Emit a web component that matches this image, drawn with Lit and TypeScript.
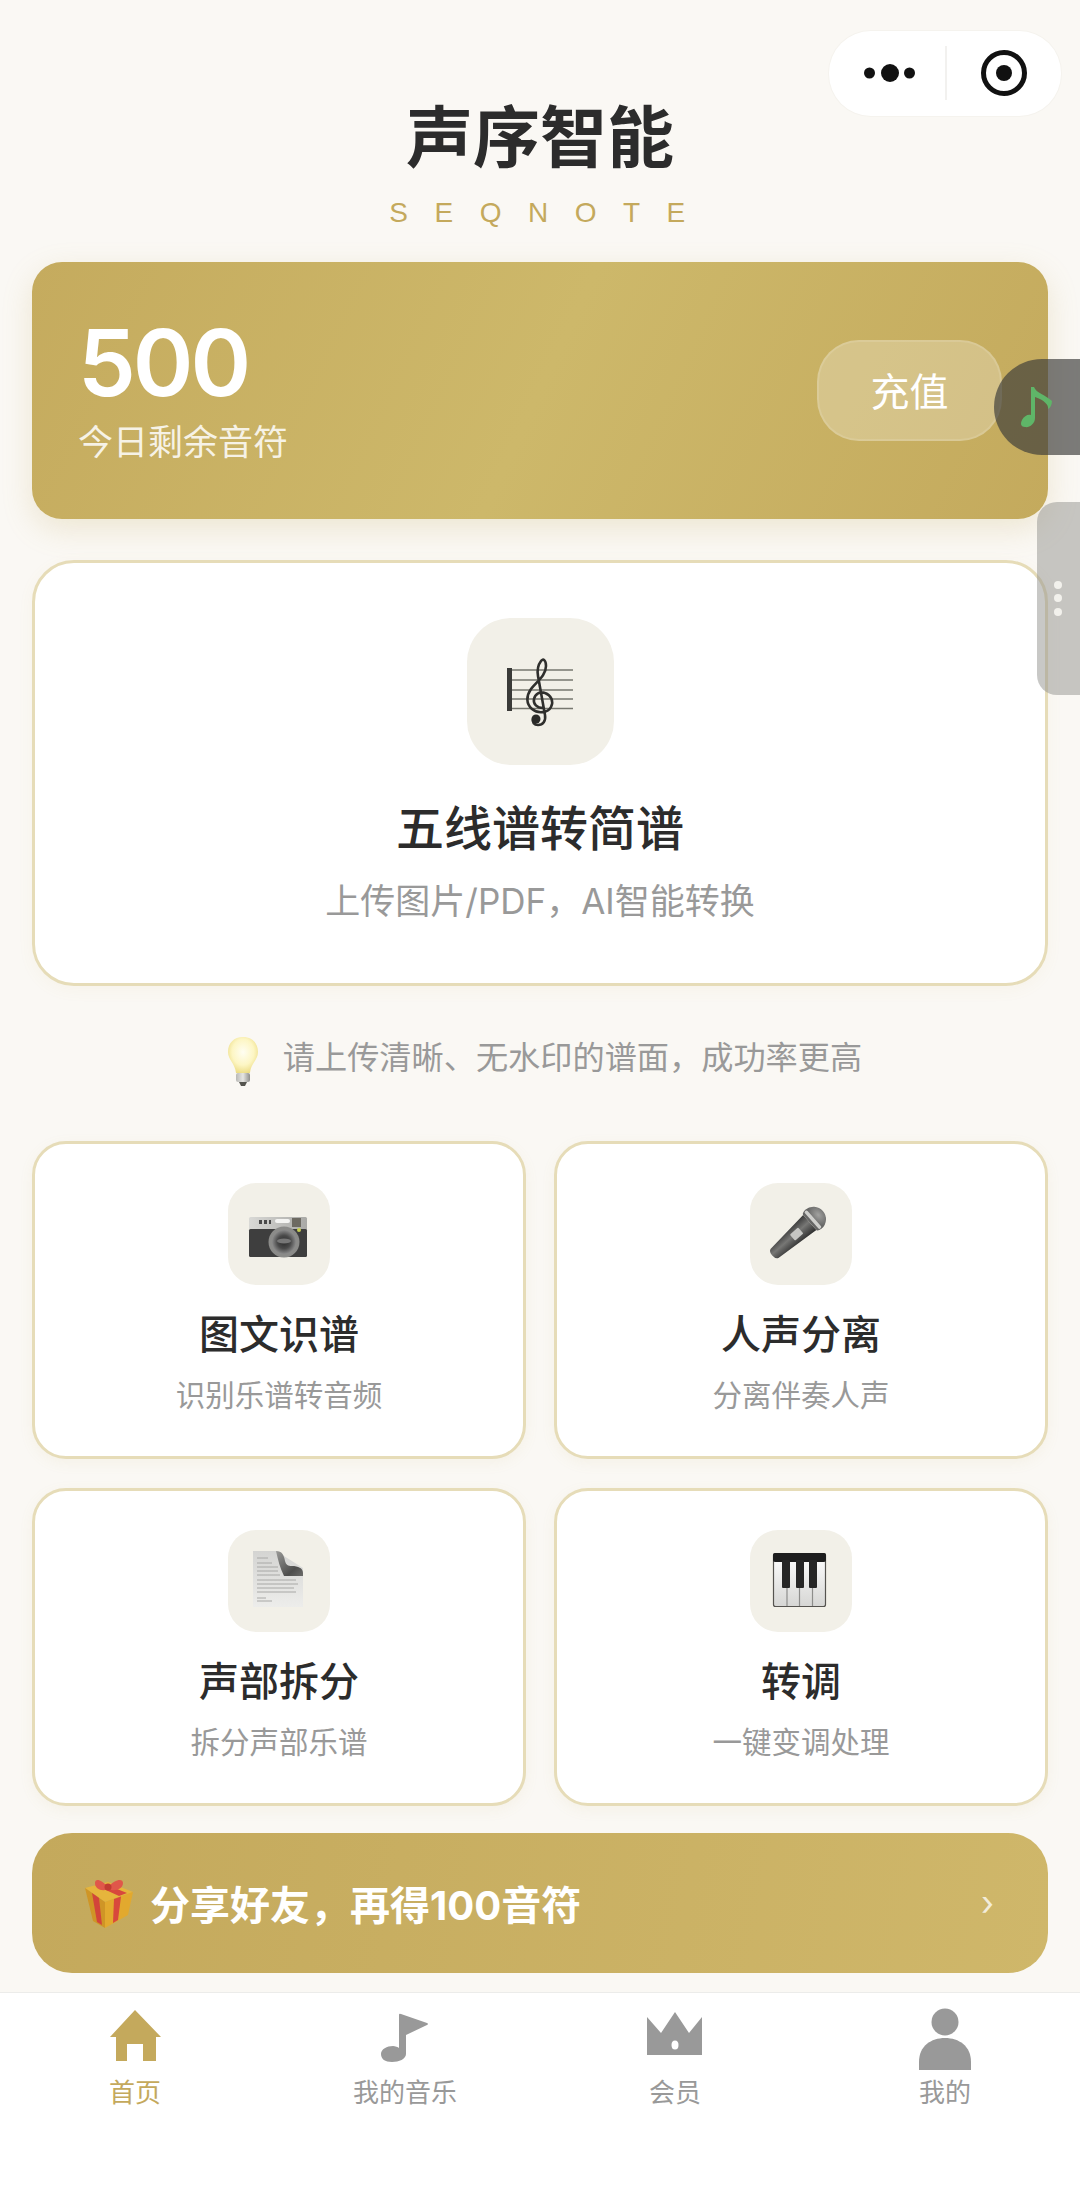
import { LitElement, html, css, svg } from "lit";
import { customElement } from "lit/decorators.js";

// Feature tiles on the home screen: each icon is drawn on a 102px tile.
const cameraIcon = svg`
  <defs>
    <linearGradient id="camTop" x1="0" y1="0" x2="1" y2="0">
      <stop offset="0" stop-color="#d9d9d6"/><stop offset="1" stop-color="#a9a9a6"/>
    </linearGradient>
    <radialGradient id="camLens"><stop offset="0" stop-color="#2c2c2c"/><stop offset=".55" stop-color="#4a4a4a"/><stop offset="1" stop-color="#8a8a8a"/></radialGradient>
  </defs>
  <rect x="21" y="34" width="58" height="14" rx="1.5" fill="url(#camTop)"/>
  <rect x="21" y="46" width="58" height="28" rx="1.5" fill="#3e3e3e"/>
  <rect x="31" y="37" width="3" height="4" fill="#4a4a4a"/><rect x="36" y="37" width="3" height="4" fill="#4a4a4a"/><rect x="41" y="37" width="2" height="4" fill="#4a4a4a"/>
  <rect x="47" y="36" width="15" height="4" rx="2" fill="#f4f4f2"/>
  <rect x="64" y="35" width="9" height="9" fill="#6d6a62"/>
  <circle cx="71" cy="47" r="2" fill="#c8cf52"/>
  <circle cx="56" cy="59" r="15.5" fill="#8b8b89"/>
  <circle cx="56" cy="59" r="12" fill="url(#camLens)"/>
  <ellipse cx="56" cy="58" rx="7" ry="2.5" fill="#777"/>
`;

// Handheld microphone: drawn upright around its head, then tilted towards the lower left.
const micIcon = svg`
  <defs>
    <linearGradient id="micBody" x1="0" y1="0" x2="1" y2="0">
      <stop offset="0" stop-color="#3a3a3a"/><stop offset=".45" stop-color="#777775"/><stop offset="1" stop-color="#2e2e2e"/>
    </linearGradient>
    <radialGradient id="micHead" cx=".5" cy=".35"><stop offset="0" stop-color="#a2a2a0"/><stop offset="1" stop-color="#666665"/></radialGradient>
  </defs>
  <g transform="translate(66.500 33.500) rotate(48.600)">
    <path d="M-10 9 H10 L6 56 Q5 59 0 59 Q-5 59 -6 56 Z" fill="url(#micBody)"/>
    <path d="M-12.500 4 A12.500 12.500 0 1 1 12.500 4 Q12 9 10 9 H-10 Q-12 9 -12.500 4 Z" fill="url(#micHead)"/>
    <rect x="-11.500" y="3" width="23" height="3.500" rx="1.500" fill="#cfcfcc"/>
    <rect x="-4" y="21" width="8" height="11" rx="1" fill="#c6c6c3"/>
  </g>
`;

const docIcon = svg`
  <defs>
    <linearGradient id="docPage" x1="0" y1="0" x2="0" y2="1">
      <stop offset="0" stop-color="#d4d4d2"/><stop offset="1" stop-color="#ededeb"/>
    </linearGradient>
    <linearGradient id="docFold" x1="0" y1="0" x2="1" y2="1">
      <stop offset="0" stop-color="#9a9a98"/><stop offset=".7" stop-color="#4e4e4d"/><stop offset="1" stop-color="#6c6c6a"/>
    </linearGradient>
  </defs>
  <path d="M25 21 H48 L75 38 V77 H25 Z" fill="url(#docPage)"/>
  <path d="M48 21 C54 21 56 25 57 31 C58 35 60 36 64 36 C70 36 75 38 75 43 L75 46 L56 46 C52 38 50 30 48 21 Z" fill="url(#docFold)"/>
  <g stroke="#a8a8a6" stroke-width="1">
    <path d="M29 28 H40 M29 33 H44 M29 37 H50 M29 41 H50 M29 45 H52"/>
    <path d="M29 50 H68 M29 54 H70 M29 58 H66 M29 62 H68 M29 68 H38 M29 71 H44"/>
  </g>
`;

const pianoIcon = svg`
  <defs>
    <linearGradient id="ivory" x1="0" y1="0" x2="0" y2="1">
      <stop offset="0" stop-color="#ffffff"/><stop offset="1" stop-color="#d6d6d4"/>
    </linearGradient>
  </defs>
  <rect x="23.5" y="23.5" width="52" height="53" rx="2" fill="url(#ivory)" stroke="#55534f" stroke-width="1.2"/>
  <rect x="23" y="23" width="53" height="9" rx="2" fill="#1d1d1d"/>
  <path d="M37 58 V76 M49.5 58 V76 M62.5 58 V76" stroke="#8d8d8b" stroke-width="1.2"/>
  <rect x="32" y="30" width="8" height="28" rx="1" fill="#262626"/>
  <rect x="46" y="30" width="8" height="28" rx="1" fill="#262626"/>
  <rect x="59" y="30" width="8" height="28" rx="1" fill="#262626"/>
`;

const FEATURES = [
  { title: "图文识谱", sub: "识别乐谱转音频", icon: cameraIcon },
  { title: "人声分离", sub: "分离伴奏人声", icon: micIcon },
  { title: "声部拆分", sub: "拆分声部乐谱", icon: docIcon },
  { title: "转调", sub: "一键变调处理", icon: pianoIcon },
];

// Bottom navigation glyphs share an 80x64 box.
const TABS = [
  {
    label: "首页",
    active: true,
    icon: svg`<path fill-rule="evenodd" d="M40 2 L66 29 H61 V53 H48 V36 H32 V53 H21 V29 H15 Z"/>`,
  },
  {
    label: "我的音乐",
    active: false,
    icon: svg`<path d="M34 7 Q34 5 36 6 L62 15 Q64 16 62 17 L41 27 V46 C41 51 34 54 27 54 C20 54 16 51 16 46 C16 41 22 38 28 38 C30 38 33 39 34 40 Z"/>`,
  },
  {
    label: "会员",
    active: false,
    icon: svg`<path d="M12 9 L26 25 L40 4 L54 25 L67 9 V47 H12 Z"/><ellipse cx="40" cy="37" rx="3.5" ry="4.5" fill="#fff"/>`,
  },
  {
    label: "我的",
    active: false,
    icon: svg`<circle cx="40" cy="14" r="13.5"/><path d="M14 62 V54 C14 38 26 30 40 30 C54 30 66 38 66 54 V62 Z"/>`,
  },
];

@customElement("app-root")
export class AppRoot extends LitElement {
  static styles = css`
    :host {
      display: block;
      position: relative;
      width: 1080px;
      height: 2211px;
      overflow: hidden;
      background: #faf8f4;
      color: #2c2c2c;
      font-family: Inter, "Noto Sans CJK SC", sans-serif;
    }
    .page {
      display: flex;
      flex-direction: column;
      height: 100%;
      box-sizing: border-box;
    }
    .content {
      padding: 98px 32px 0;
      display: flex;
      flex-direction: column;
    }
    .brand {
      text-align: center;
      font-size: 67px;
      line-height: 80px;
      font-weight: 700;
    }
    .brand-en {
      margin-top: 15px;
      text-align: center;
      font-size: 28px;
      line-height: 40px;
      letter-spacing: 26.5px;
      padding-left: 21px;
      color: #c4a95c;
      font-family: "Liberation Sans", sans-serif;
    }
    .balance {
      margin-top: 29px;
      height: 257px;
      box-sizing: border-box;
      padding: 0 46px;
      border-radius: 30px;
      display: flex;
      align-items: center;
      justify-content: space-between;
      color: #fff;
      background: linear-gradient(115deg, #c5ab5e 0%, #cdb86a 50%, #c4aa5d 100%);
      box-shadow: 0 10px 30px rgba(196, 169, 92, 0.22);
    }
    .count {
      font-size: 92px;
      line-height: 96px;
      font-weight: 600;
      letter-spacing: -3px;
    }
    .count-label {
      margin-top: 7px;
      font-size: 35px;
      line-height: 48px;
      color: rgba(255, 255, 255, 0.85);
    }
    .recharge {
      width: 185px;
      height: 101px;
      box-sizing: border-box;
      padding-bottom: 4px;
      border-radius: 42px;
      background: rgba(255, 255, 255, 0.25);
      border: 2px solid rgba(255, 255, 255, 0.12);
      display: flex;
      align-items: center;
      justify-content: center;
      font-size: 39px;
    }
    .hero {
      margin-top: 41px;
      height: 426px;
      box-sizing: border-box;
      padding-top: 55px;
      background: #fff;
      border: 3px solid #e6dcb8;
      border-radius: 42px;
      display: flex;
      flex-direction: column;
      align-items: center;
      box-shadow: 0 4px 16px rgba(196, 169, 92, 0.06);
    }
    .tile {
      background: #f2f0e8;
      display: block;
      flex: none;
    }
    .hero .tile {
      width: 147px;
      height: 147px;
      border-radius: 44px;
    }
    .hero-title {
      margin-top: 32px;
      font-size: 48px;
      line-height: 64px;
      font-weight: 500;
    }
    .hero-sub {
      margin-top: 16px;
      font-size: 35px;
      line-height: 48px;
      color: #999;
    }
    .hint {
      margin: 45px 0 62px;
      padding-left: 10px;
      height: 48px;
      display: flex;
      align-items: center;
      justify-content: center;
      gap: 25px;
      font-size: 32.2px;
      color: #999;
    }
    .hint svg {
      margin-top: 12px;
    }
    .grid {
      display: grid;
      grid-template-columns: 1fr 1fr;
      column-gap: 28px;
      row-gap: 29px;
    }
    .feature {
      height: 318px;
      box-sizing: border-box;
      padding-top: 39px;
      background: #fff;
      border: 3px solid #e6dcb8;
      border-radius: 34px;
      display: flex;
      flex-direction: column;
      align-items: center;
      box-shadow: 0 4px 14px rgba(196, 169, 92, 0.08);
    }
    .feature .tile {
      width: 102px;
      height: 102px;
      border-radius: 28px;
    }
    .feature-title {
      margin-top: 22px;
      font-size: 40px;
      line-height: 56px;
      font-weight: 500;
    }
    .feature-sub {
      margin-top: 10px;
      font-size: 29.5px;
      line-height: 44px;
      color: #999;
    }
    .share {
      margin-top: 27px;
      height: 140px;
      box-sizing: border-box;
      padding: 0 54px 0 53px;
      border-radius: 40px;
      display: flex;
      align-items: center;
      color: #fff;
      background: linear-gradient(100deg, #c4a95c 0%, #cfb76a 100%);
    }
    .share-text {
      margin-left: 17px;
      flex: 1;
      font-size: 40px;
      font-weight: 700;
    }
    .share-arrow {
      font-size: 34px;
      line-height: 40px;
      color: rgba(255, 255, 255, 0.75);
    }
    .tabs {
      margin-top: 19px;
      flex: 1;
      box-sizing: border-box;
      padding-top: 15px;
      background: #fff;
      border-top: 1px solid #ececea;
      display: grid;
      grid-template-columns: repeat(4, 270px);
      align-content: start;
    }
    .tab {
      display: flex;
      flex-direction: column;
      align-items: center;
      color: #999;
      fill: #999;
      font-size: 26px;
      line-height: 36px;
    }
    .tab.on {
      color: #c4a95c;
      fill: #c4a95c;
    }
    .tab svg {
      display: block;
      margin-bottom: 3px;
    }
    .capsule {
      position: absolute;
      left: 829px;
      top: 31px;
      width: 232px;
      height: 85px;
      box-sizing: border-box;
      border-radius: 42px;
      background: #fff;
      box-shadow: 0 0 0 1px #f5f3ee;
    }
    .float-music {
      position: absolute;
      left: 994px;
      top: 359px;
      width: 86px;
      height: 96px;
      border-radius: 48px 0 0 48px;
      background: rgba(58, 58, 56, 0.66);
    }
    .float-handle {
      position: absolute;
      left: 1037px;
      top: 502px;
      width: 43px;
      height: 193px;
      border-radius: 20px 0 0 20px;
      background: rgba(150, 150, 146, 0.52);
    }
  `;

  private clef() {
    return html`<svg class="tile" viewBox="0 0 147 147">
      <rect x="40" y="50" width="5" height="43" fill="#3a3a38" />
      <path d="M45 52 H106 M45 62 H106 M45 72 H106 M45 81 H106 M45 90.500 H106" stroke="#77776f" stroke-width="1.400" />
      <path
        d="M76 90 C70 90 66 86 67 81 C68 76 73 73 78 75 C84 77 87 83 84 89 C81 95 71 96 65 91 C59 86 59 78 64 71 C69 64 79 58 79 48 C79 42 76 40 74 43 C71 47 70 52 71 58 L78 97 C79 103 76 107 71 107 C67 107 65 104 66 101"
        fill="none"
        stroke="#2f2f2d"
        stroke-width="2.600"
      />
      <circle cx="69" cy="101" r="4.500" fill="#2a2a28" />
    </svg>`;
  }

  private bulb() {
    return html`<svg width="30" height="49" viewBox="0 0 30 49">
      <defs>
        <radialGradient id="glass" cx=".5" cy=".42" r=".6">
          <stop offset="0" stop-color="#fffef2" />
          <stop offset=".6" stop-color="#fdf6c4" />
          <stop offset="1" stop-color="#ecdc84" />
        </radialGradient>
        <linearGradient id="socket" x1="0" y1="0" x2="1" y2="0">
          <stop offset="0" stop-color="#b9b9b6" />
          <stop offset=".5" stop-color="#e6e6e3" />
          <stop offset="1" stop-color="#8e8e8b" />
        </linearGradient>
      </defs>
      <path d="M15 0 C24 0 30 6 30 15 C30 23 23 26 22 36 H8 C7 26 0 23 0 15 C0 6 6 0 15 0 Z" fill="url(#glass)" />
      <rect x="8" y="36" width="14" height="9" rx="2" fill="url(#socket)" />
      <path d="M11 45 H19 L17 49 H13 Z" fill="#55554f" />
    </svg>`;
  }

  private gift() {
    return html`<svg width="48" height="49" viewBox="0 0 48 49">
      <path d="M0 9 L23 3 L48 13 L20 23 Z" fill="#e6b53c" />
      <path d="M0 9 L20 23 L20 49 L8 42 Z" fill="#cf9526" />
      <path d="M20 23 L48 13 L43 36 L20 49 Z" fill="#e2a92e" />
      <path d="M7 14 L14 19 L17 46 L12 43 Z" fill="#d2453a" />
      <path d="M29 20 L36 17.500 L33 41 L28 44 Z" fill="#d8483c" />
      <path d="M10 6 L17 4 L42 14 L34 17 Z" fill="#d8483c" />
      <path d="M23 8 C16 0 10 -1 10 4 C10 10 17 13 23 10 C30 13 38 10 38 4 C38 -1 30 0 23 8 Z" fill="#e0574a" />
      <circle cx="23" cy="8" r="3.500" fill="#c23c32" />
    </svg>`;
  }

  render() {
    return html`
      <div class="page">
        <div class="content">
          <div class="brand">声序智能</div>
          <div class="brand-en">SEQNOTE</div>

          <section class="balance">
            <div>
              <div class="count">500</div>
              <div class="count-label">今日剩余音符</div>
            </div>
            <div class="recharge">充值</div>
          </section>

          <section class="hero">
            ${this.clef()}
            <div class="hero-title">五线谱转简谱</div>
            <div class="hero-sub">上传图片/PDF，AI智能转换</div>
          </section>

          <div class="hint">${this.bulb()}<span>请上传清晰、无水印的谱面，成功率更高</span></div>

          <div class="grid">
            ${FEATURES.map(
              (f) => html`<div class="feature">
                <svg class="tile" viewBox="0 0 102 102">${f.icon}</svg>
                <div class="feature-title">${f.title}</div>
                <div class="feature-sub">${f.sub}</div>
              </div>`,
            )}
          </div>

          <div class="share">
            ${this.gift()}
            <div class="share-text">分享好友，再得100音符</div>
            <div class="share-arrow">›</div>
          </div>
        </div>

        <nav class="tabs">
          ${TABS.map(
            (t) => html`<div class="tab ${t.active ? "on" : ""}">
              <svg width="80" height="64" viewBox="0 0 80 64">${t.icon}</svg>
              <span>${t.label}</span>
            </div>`,
          )}
        </nav>
      </div>

      <div class="capsule">
        <svg width="232" height="85" viewBox="829 31 232 85">
          <circle cx="869.500" cy="73" r="5.500" fill="#111" />
          <circle cx="890" cy="73" r="9" fill="#111" />
          <circle cx="909.500" cy="73" r="5.500" fill="#111" />
          <rect x="945.500" y="46" width="1" height="54" fill="#e6e4df" />
          <circle cx="1004" cy="73" r="20.500" fill="none" stroke="#111" stroke-width="5" />
          <circle cx="1004" cy="73" r="8" fill="#111" />
        </svg>
      </div>

      <div class="float-music">
        <svg width="86" height="96" viewBox="0 0 86 96">
          <path
            d="M37 28 L40 28 C42 34 52 36 58 42 C58 46 56 49 54 50 C55 46 50 41 41 38 L41 59 C41 65 35 69 31 68 C27 68 26 65 28 61 C30 57 34 55 37 56 Z"
            fill="#5fb568"
          />
        </svg>
      </div>

      <div class="float-handle">
        <svg width="43" height="193" viewBox="0 0 43 193">
          <circle cx="21" cy="83" r="4" fill="#f2f1ec" />
          <circle cx="21" cy="96" r="4" fill="#f2f1ec" />
          <circle cx="21" cy="110" r="4" fill="#f2f1ec" />
        </svg>
      </div>
    `;
  }
}
